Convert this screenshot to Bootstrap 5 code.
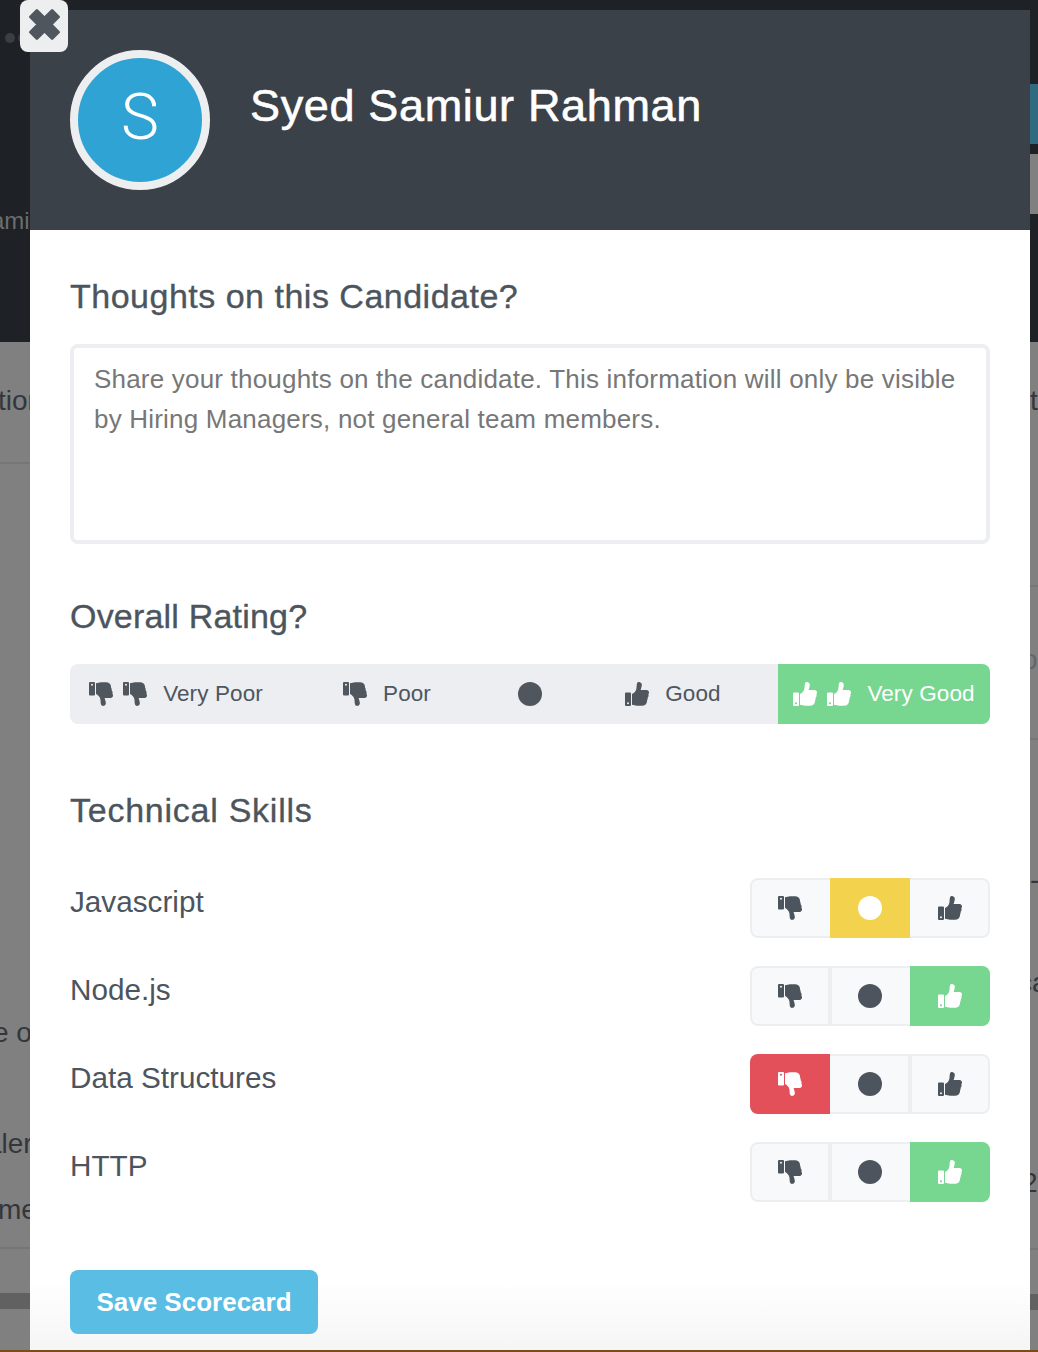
<!DOCTYPE html>
<html lang="en">
<head>
<meta charset="utf-8">
<title>Scorecard</title>
<link rel="stylesheet" href="https://cdn.jsdelivr.net/npm/bootstrap@5.3.0/dist/css/bootstrap.min.css">
<style>
html,body{margin:0;height:1352px;overflow:hidden;background:#808080;font-family:"Liberation Sans",Arial,sans-serif;color:#4c555d}
.stage{position:relative;width:1038px;height:1352px;overflow:hidden}
.gutter-l{width:30px;overflow:hidden}
.gutter-r{width:8px;overflow:hidden}
.dark-part{height:342px;background:#1e2125;overflow:hidden}
.frag{font-size:28px;white-space:nowrap;color:#33373b;line-height:36px;height:36px}
.frag-dim{color:#6a6d70;font-size:24px}
.rule{height:2px;background:#767676}
.band{height:16px;background:#616161}
.dots{height:10px;margin-top:33px;display:flex;gap:3px;padding-left:5px}
.dots i{display:block;width:10px;height:10px;border-radius:50%;background:#3b3e42}
.edge{position:absolute;left:0;right:0;bottom:0;height:2px;background:#7d4a1c}
.sheet{position:absolute;left:30px;top:10px;width:1000px;height:1340px;background:linear-gradient(#fff 1270px,#f5f5f5 1340px);overflow:hidden}
.sheet-head{height:220px;background:#3b4148;padding:40px;gap:40px}
.avatar{width:140px;height:140px;border:8px solid #eceef0;border-radius:50%;background:#2fa4d4;color:#fff;font-family:Roboto,"Liberation Sans",sans-serif;font-weight:300;font-size:64px;line-height:1;padding-bottom:4px}
.cand-name{font-size:45px;line-height:54px;color:#fff;font-weight:400;margin:-28px 0 0;letter-spacing:.65px;-webkit-text-stroke:.6px #fff}
.closer{position:absolute;left:20px;top:0;width:48px;height:52px;background:#eceef0;border:0;border-radius:8px;padding:0 0 3px}
.sheet-body{padding:0 40px}
.sec-title{font-size:34px;line-height:40px;font-weight:400;color:#4c555d;margin:0;letter-spacing:.5px;-webkit-text-stroke:.35px #4c555d}
.thoughts{display:block;width:920px;height:200px;border:4px solid #eceef1;border-radius:8px;padding:11px 20px;font-size:26px;letter-spacing:.2px;line-height:40px;color:#777;resize:none;margin-top:28px;background:#fff}
.thoughts::placeholder{color:#777;opacity:1}
.rating{width:920px;height:60px;background:#eceef1;border-radius:8px;overflow:hidden;margin-top:28px}
.rate-btn{font-size:22.500px;letter-spacing:.1px;color:#4f565e;gap:10px;height:60px}
.rate-w{width:212px}.rate-n{width:210px}.rate-c{width:76px}
.rate-lbl{margin-left:6px}
.is-good{background:#77d690;color:#fff}
.is-warn{background:#f3d24d;color:#fff}
.is-bad{background:#e3505a;color:#fff}
.ico{width:24px;height:24px;fill:currentColor;display:block}
.dot-ico{width:24px;height:24px;border-radius:50%;background:currentColor;display:block}
.skill{height:60px;margin-bottom:28px}
.skill-name{font-size:29.700px;line-height:48px;color:#4c555d;height:48px}
.tri{width:240px;height:60px;border:2px solid #eceef0;border-radius:8px;background:#f8f9fa;color:#4c555d}
.tri-cell{width:80px;height:60px;margin:-2px 0}
.tri-cell:first-child{margin-left:-2px;border-radius:8px 0 0 8px}
.tri-cell:last-child{margin-right:-2px;border-radius:0 8px 8px 0}
.tri-cell.sep{position:relative;box-shadow:2px 0 0 #eceef0,inset -2px 0 0 #eceef0}
.tri-cell.sep:first-child{border-radius:8px 0 0 8px}
.save{width:248px;height:64px;background:#5abde3;color:#fff;border:0;border-radius:8px;font-size:26px;font-weight:700;padding:0;margin-top:40px}
.save:hover{background:#5abde3;color:#fff}
.t1{margin-top:46px}
.t2{margin-top:52px;letter-spacing:.2px}
.t3{margin-top:66px;letter-spacing:.75px}
.skills{margin-top:48px}
.g-ami{margin:160px 0 0 -9px}
.g-tion{margin:41px 0 0 -2px}
.g-r1{margin-top:43px}
.g-eo{margin-top:551px;margin-left:-7px}
.g-aler{margin:75px 0 0 -14px}
.g-me{margin:30px 0 0 -2px}
.g-r2{margin-top:19px}
.g-band{margin-top:44px}
.r-teal{height:60px;margin-top:84px;background:#2e6a80}
.r-gray{height:60px;margin-top:10px;background:#808080}
.g-rt{margin-top:41px}
.g-rr0{margin-top:166px}
.g-ro{margin:55px 0 0 -8px;color:#63676b}
.g-rr1{margin-top:60px}
.g-rdash{margin-top:122px}
.g-rca{margin:67px 0 0 -12px}
.g-r2n{margin:164px 0 0 -8px}
.g-rr2{margin-top:47px}
.g-band2{margin-top:44px}
</style>
</head>
<body>
<svg width="0" height="0" class="d-block" aria-hidden="true"><defs>
<symbol id="up" viewBox="0 0 24 24"><path fill-rule="evenodd" d="M1 10.500h4a1 1 0 0 1 1 1V23a1 1 0 0 1-1 1H1a1 1 0 0 1-1-1V11.500a1 1 0 0 1 1-1zM3 20.200a1 1 0 1 0 0 2 1 1 0 0 0 0-2zM7 12C9 11 10.500 9.500 11.200 7.500 11.800 5.500 11.500 3 12 1.500 12.400.4 13.500-.1 14.800.2 16.400.6 17 2 16.800 3.600 16.600 5.200 16 6.500 15.600 8L21.500 8C23 8 24 9 24 10.500 24 11.300 23.800 11.900 23.300 12.400 23.700 13.200 23.700 14.200 23.200 15 23 15.400 22.800 15.700 22.500 15.900 22.800 16.900 22.600 17.800 22 18.600 22.100 20 21.800 21 21 22 20 23.200 19 23.600 17.500 23.700L12 23.700C10.500 23.600 8.800 23 7 22.800Z"/></symbol>
<symbol id="down" viewBox="0 0 24 24"><g transform="matrix(1 0 0 -1 0 24)"><use href="#up"/></g></symbol>
</defs></svg>

<div class="stage">
  <div class="d-flex h-100">
    <div class="gutter-l">
      <div class="dark-part">
        <div class="dots"><i></i><i></i></div>
        <div class="frag frag-dim g-ami">amir</div>
      </div>
      <div class="frag g-tion">tion</div>
      <div class="rule g-r1"></div>
      <div class="frag g-eo">e o</div>
      <div class="frag g-aler">aler</div>
      <div class="frag g-me">me</div>
      <div class="rule g-r2"></div>
      <div class="band g-band"></div>
    </div>
    <div class="flex-grow-1"><div class="dark-part"></div></div>
    <div class="gutter-r">
      <div class="dark-part">
        <div class="r-teal"></div>
        <div class="r-gray"></div>
      </div>
      <div class="frag g-rt">t</div>
      <div class="rule g-rr0"></div>
      <div class="frag g-ro">o</div>
      <div class="rule g-rr1"></div>
      <div class="frag g-rdash">-</div>
      <div class="frag g-rca">ca</div>
      <div class="frag g-r2n">2</div>
      <div class="rule g-rr2"></div>
      <div class="band g-band2"></div>
    </div>
  </div>

  <div class="sheet">
    <div class="sheet-head d-flex align-items-center">
      <div class="avatar d-flex align-items-center justify-content-center flex-shrink-0">S</div>
      <h1 class="cand-name">Syed Samiur Rahman</h1>
    </div>
    <div class="sheet-body">
      <h2 class="sec-title t1">Thoughts on this Candidate?</h2>
      <textarea class="thoughts" placeholder="Share your thoughts on the candidate. This information will only be visible by Hiring Managers, not general team members."></textarea>
      <h2 class="sec-title t2">Overall Rating?</h2>
      <div class="rating d-flex">
        <div class="rate-btn rate-w d-flex align-items-center justify-content-center"><svg class="ico"><use href="#down"/></svg><svg class="ico"><use href="#down"/></svg><span class="rate-lbl">Very Poor</span></div>
        <div class="rate-btn rate-n d-flex align-items-center justify-content-center"><svg class="ico"><use href="#down"/></svg><span class="rate-lbl">Poor</span></div>
        <div class="rate-btn rate-c d-flex align-items-center justify-content-center"><span class="dot-ico"></span></div>
        <div class="rate-btn rate-n d-flex align-items-center justify-content-center"><svg class="ico"><use href="#up"/></svg><span class="rate-lbl">Good</span></div>
        <div class="rate-btn rate-w is-good d-flex align-items-center justify-content-center"><svg class="ico"><use href="#up"/></svg><svg class="ico"><use href="#up"/></svg><span class="rate-lbl">Very Good</span></div>
      </div>
      <h2 class="sec-title t3">Technical Skills</h2>
      <div class="skills">
        <div class="skill d-flex justify-content-between">
          <div class="skill-name">Javascript</div>
          <div class="tri d-flex">
            <div class="tri-cell d-flex align-items-center justify-content-center"><svg class="ico"><use href="#down"/></svg></div>
            <div class="tri-cell is-warn d-flex align-items-center justify-content-center"><span class="dot-ico"></span></div>
            <div class="tri-cell d-flex align-items-center justify-content-center"><svg class="ico"><use href="#up"/></svg></div>
          </div>
        </div>
        <div class="skill d-flex justify-content-between">
          <div class="skill-name">Node.js</div>
          <div class="tri d-flex">
            <div class="tri-cell sep d-flex align-items-center justify-content-center"><svg class="ico"><use href="#down"/></svg></div>
            <div class="tri-cell d-flex align-items-center justify-content-center"><span class="dot-ico"></span></div>
            <div class="tri-cell is-good d-flex align-items-center justify-content-center"><svg class="ico"><use href="#up"/></svg></div>
          </div>
        </div>
        <div class="skill d-flex justify-content-between">
          <div class="skill-name">Data Structures</div>
          <div class="tri d-flex">
            <div class="tri-cell is-bad d-flex align-items-center justify-content-center"><svg class="ico"><use href="#down"/></svg></div>
            <div class="tri-cell sep d-flex align-items-center justify-content-center"><span class="dot-ico"></span></div>
            <div class="tri-cell d-flex align-items-center justify-content-center"><svg class="ico"><use href="#up"/></svg></div>
          </div>
        </div>
        <div class="skill d-flex justify-content-between">
          <div class="skill-name">HTTP</div>
          <div class="tri d-flex">
            <div class="tri-cell sep d-flex align-items-center justify-content-center"><svg class="ico"><use href="#down"/></svg></div>
            <div class="tri-cell d-flex align-items-center justify-content-center"><span class="dot-ico"></span></div>
            <div class="tri-cell is-good d-flex align-items-center justify-content-center"><svg class="ico"><use href="#up"/></svg></div>
          </div>
        </div>
      </div>
      <button type="button" class="btn save">Save Scorecard</button>
    </div>
  </div>

  <button type="button" class="closer d-flex align-items-center justify-content-center" aria-label="Close">
    <svg width="37" height="37" viewBox="0 0 34 34"><path d="M10 4L17 11 24 4 30 10 23 17 30 24 24 30 17 23 10 30 4 24 11 17 4 10Z" fill="#4f565e" stroke="#4f565e" stroke-width="2.500" stroke-linejoin="round"/></svg>
  </button>
  <div class="edge"></div>
</div>
<script src="https://cdn.jsdelivr.net/npm/bootstrap@5.3.0/dist/js/bootstrap.bundle.min.js"></script>
</body>
</html>
